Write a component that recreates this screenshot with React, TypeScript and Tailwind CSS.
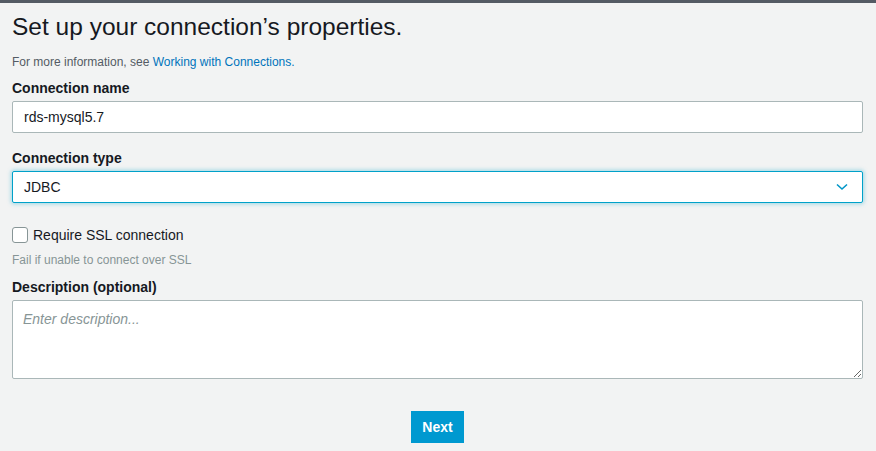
import React from "react";

export default function App() {
  return (
    <div
      className="w-[876px] h-[451px] bg-[#f2f3f3] overflow-hidden text-[#16191f]"
      style={{ fontFamily: '"Liberation Sans", Arial, sans-serif' }}
    >
      <div className="h-[3px] bg-[#545b64]" />
      <div className="px-[12px] pr-[13px]">
        <h1 className="text-[24.5px] leading-[28px] mt-[10px] text-[#16191f]">
          Set up your connection’s properties.
        </h1>
        <p className="text-[12px] leading-[14px] mt-[14px] text-[#545b64]">
          For more information, see{" "}
          <span className="text-[#0073bb]">Working with Connections.</span>
        </p>
        <label className="block text-[14px] font-bold leading-[16px] mt-[11px]">
          Connection name
        </label>
        <div className="mt-[5px] h-[32px] bg-white border border-[#aab7b8] rounded-[2px] flex items-center px-[11px] text-[14px]">
          rds-mysql5.7
        </div>
        <label className="block text-[14px] font-bold leading-[16px] mt-[17px]">
          Connection type
        </label>
        <div className="mt-[5px] h-[32px] bg-white border border-[#00a1c9] rounded-[2px] shadow-[0_0_4px_1px_rgba(0,161,201,0.35)] flex items-center justify-between px-[11px] text-[14px]">
          <span>JDBC</span>
          <svg width="12" height="8" viewBox="0 0 12 8" className="mr-[3px]">
            <path d="M1 1.5 L6 6 L11 1.5" fill="none" stroke="#0096c8" strokeWidth="1.6" />
          </svg>
        </div>
        <div className="flex items-center mt-[24px] h-[16px]">
          <div className="w-[16px] h-[16px] bg-white border border-[#879596] rounded-[3px]" />
          <span className="ml-[5px] text-[14px]">Require SSL connection</span>
        </div>
        <p className="text-[12px] leading-[14px] mt-[10px] text-[#879596]">
          Fail if unable to connect over SSL
        </p>
        <label className="block text-[14px] font-bold leading-[16px] mt-[12px]">
          Description (optional)
        </label>
        <textarea
          className="block mt-[5px] w-full h-[79px] bg-white border border-[#aab7b8] rounded-[2px] px-[10px] py-[8px] text-[14px] italic placeholder:text-[#879596] outline-none"
          style={{ fontFamily: '"Liberation Sans", Arial, sans-serif' }}
          placeholder="Enter description..."
        />
        <div className="flex justify-center mt-[32px]">
          <button className="w-[53px] h-[32px] bg-[#0099d0] text-white text-[14px] font-bold">
            Next
          </button>
        </div>
      </div>
    </div>
  );
}
